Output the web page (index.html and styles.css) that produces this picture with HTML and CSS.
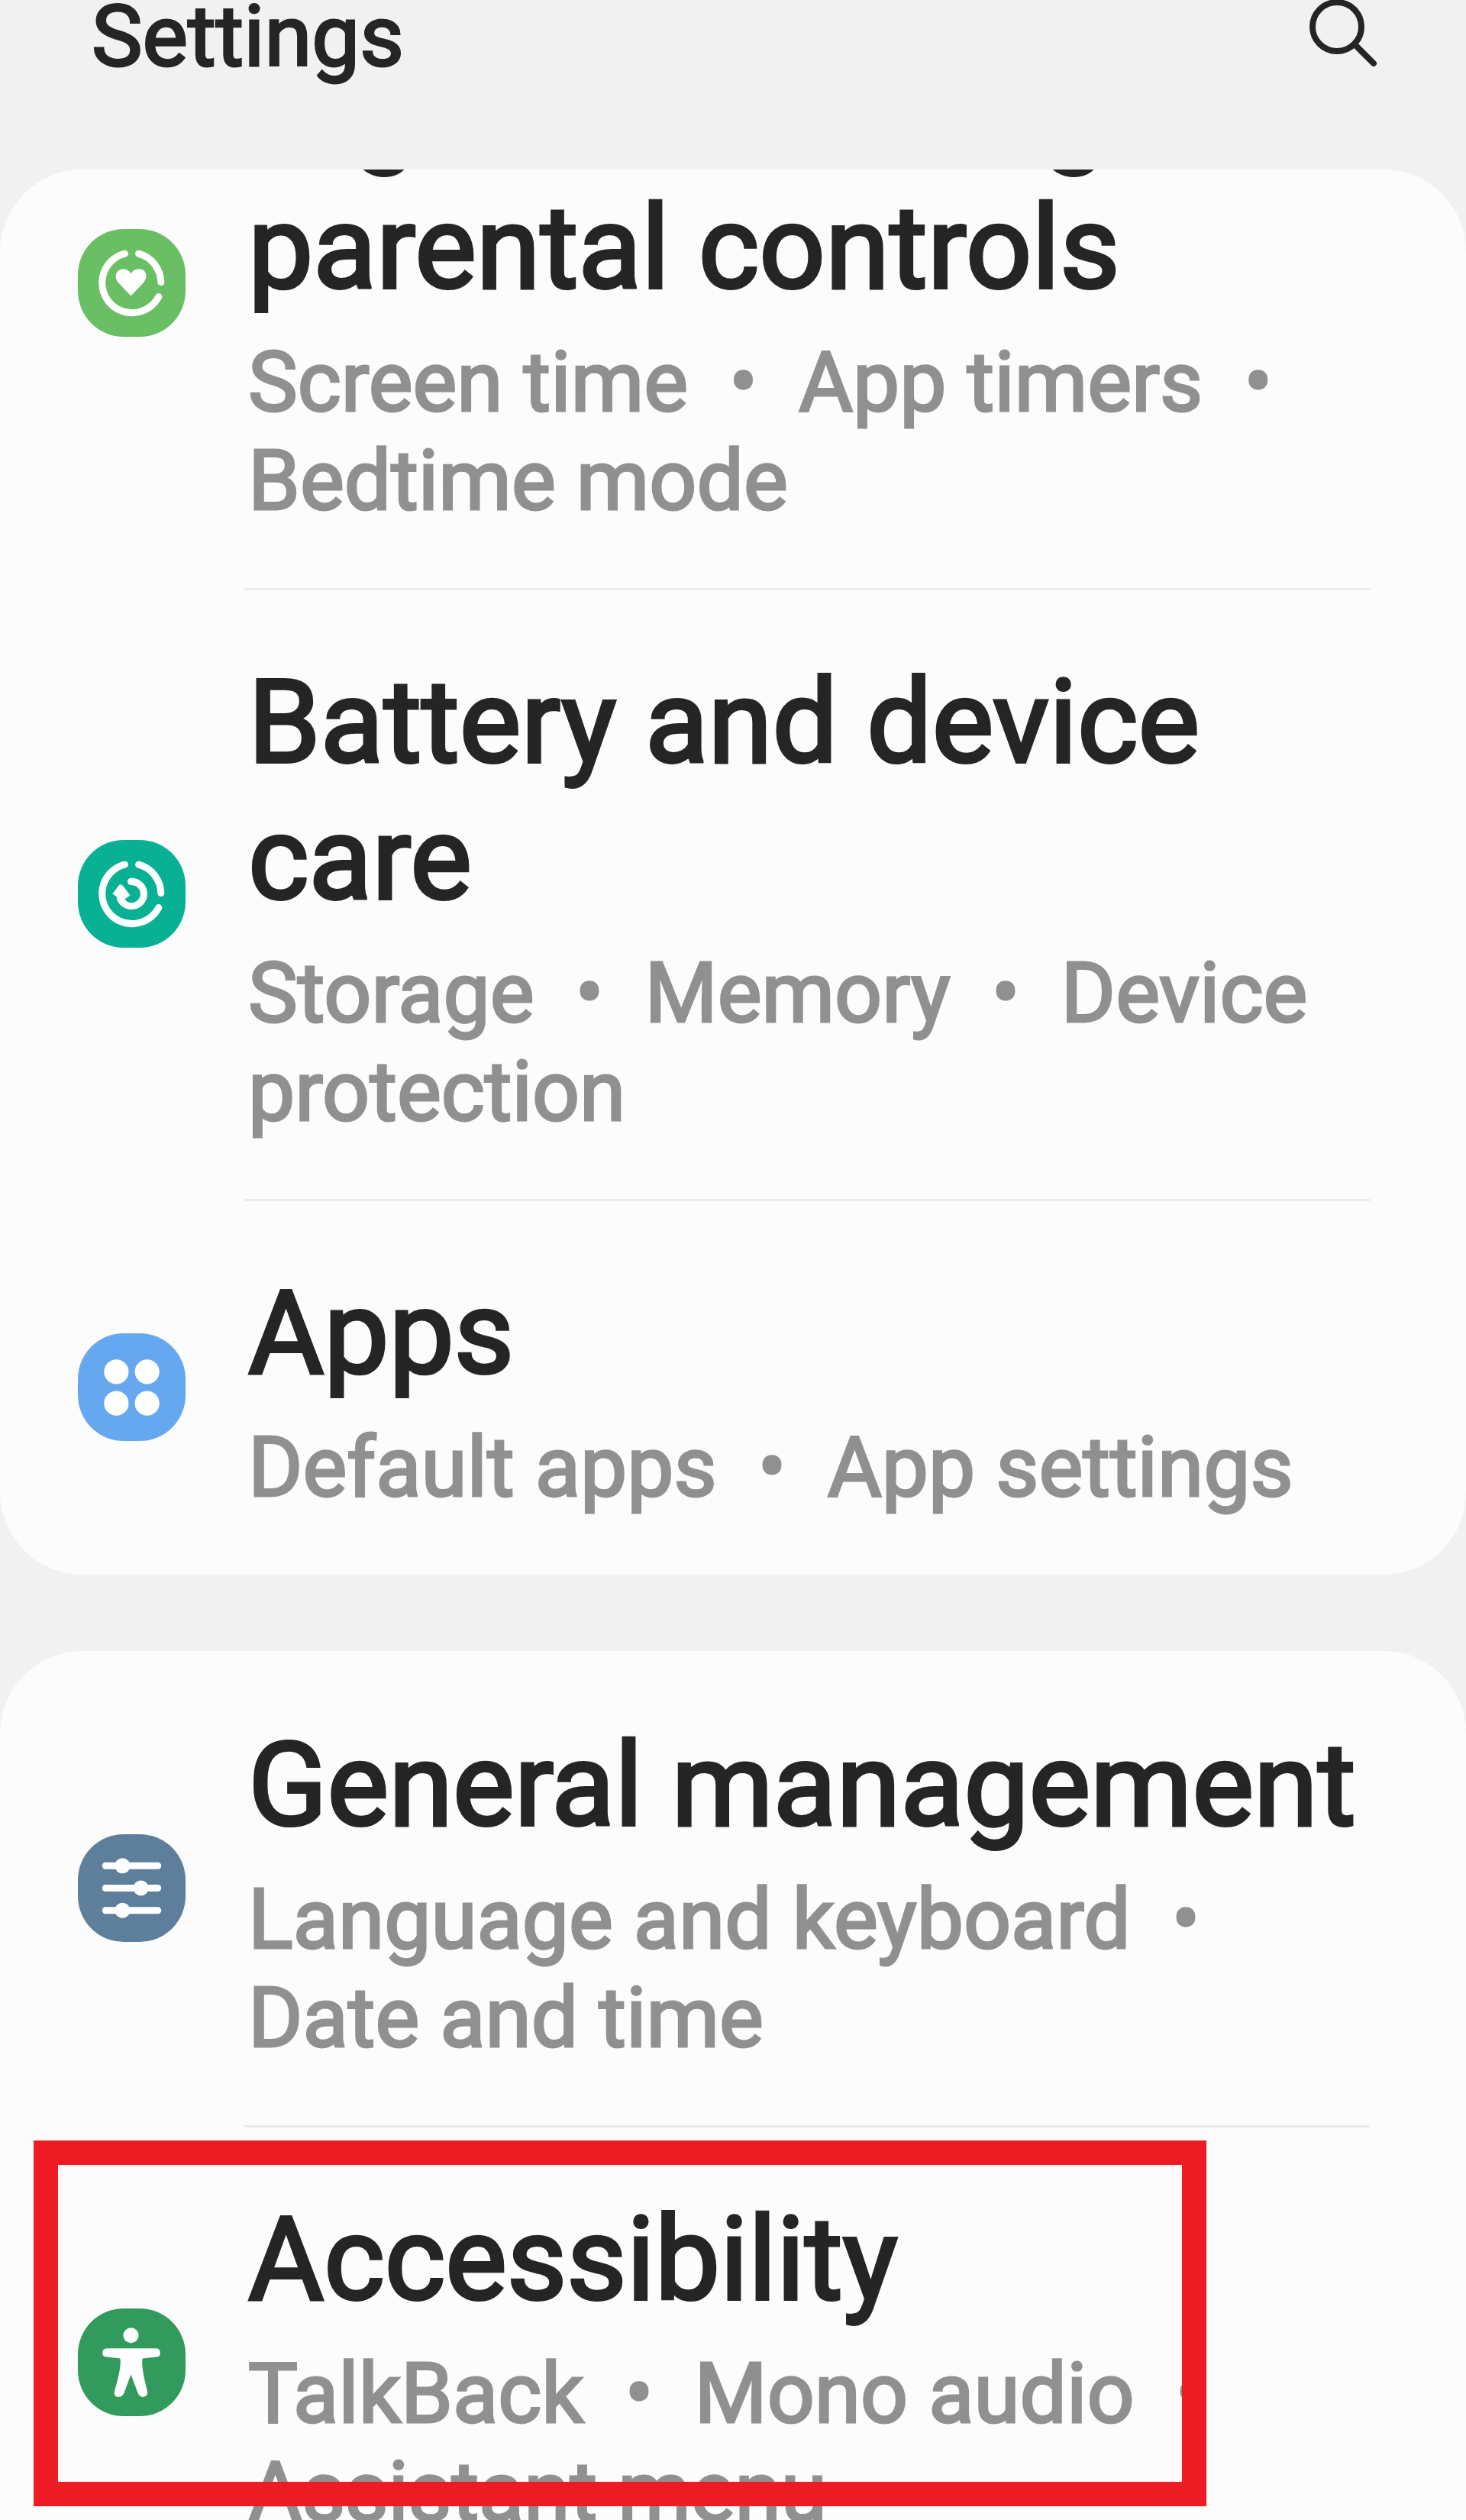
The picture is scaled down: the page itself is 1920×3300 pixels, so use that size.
FILE: index.html
```html
<!DOCTYPE html>
<html lang="en">
<head>
    <meta charset="UTF-8">
    <meta name="viewport" content="width=device-width, initial-scale=1.0">
    <title>Settings</title>
    <link rel="stylesheet" href="styles.css">
</head>
<body>

<header class="header">
    <h1>Settings</h1>
    <button class="search-button" type="button" aria-label="Search">
        <svg viewBox="2 8 96 96">
            <circle cx="41" cy="43" r="32"/>
            <path d="M65 67L89 91"/>
        </svg>
    </button>
</header>

<main class="list">
    <!-- scrolled part way down -->
    <section class="card scrolled">
        <a class="row" href="#wellbeing">
            <svg class="icon wellbeing" viewBox="0 0 140 140">
                <path class="line" d="M61 32A39 39 0 1 0 105 88M79 32A39 39 0 0 1 108 69"/>
                <path class="solid" d="M69 87L52 69C46 61 51 52 59 52C64 52 67 55 69 58C71 55 74 52 80 52C88 52 92 61 86 69Z"/>
            </svg>
            <div class="text">
                <h2>Digital Wellbeing and parental controls</h2>
                <p>Screen time&nbsp;&nbsp;•&nbsp; App timers&nbsp;&nbsp;•&nbsp; Bedtime mode</p>
            </div>
        </a>
        <a class="row" href="#battery">
            <svg class="icon battery" viewBox="0 0 140 140">
                <path class="line" d="M61 32A39 39 0 1 0 105 88M79 32A39 39 0 0 1 108 69"/>
                <path class="line" d="M69 54A16 16 0 1 1 55 76"/>
                <path class="solid" d="M45 70L54 58Q57 57 59 60L68 72L58 79Z"/>
            </svg>
            <div class="text">
                <h2>Battery and device care</h2>
                <p>Storage&nbsp;&nbsp;•&nbsp; Memory&nbsp;&nbsp;•&nbsp; Device protection</p>
            </div>
        </a>
        <a class="row" href="#apps">
            <svg class="icon apps" viewBox="0 0 140 140">
                <g class="solid">
                    <circle cx="50" cy="50" r="16"/>
                    <circle cx="90" cy="50" r="16"/>
                    <circle cx="50" cy="91" r="16"/>
                    <circle cx="90" cy="91" r="16"/>
                </g>
            </svg>
            <div class="text">
                <h2>Apps</h2>
                <p>Default apps&nbsp;&nbsp;•&nbsp; App settings</p>
            </div>
        </a>
    </section>

    <section class="card">
        <a class="row" href="#general">
            <svg class="icon general" viewBox="0 0 140 140">
                <path class="line" d="M36 41H104M36 70H104M36 99H104"/>
                <g class="solid">
                    <circle cx="58" cy="41" r="10"/>
                    <circle cx="82" cy="70" r="10"/>
                    <circle cx="58" cy="99" r="10"/>
                </g>
            </svg>
            <div class="text">
                <h2>General management</h2>
                <p>Language and keyboard&nbsp;&nbsp;•&nbsp; Date and time</p>
            </div>
        </a>
        <a class="row highlighted" href="#accessibility">
            <svg class="icon accessibility" viewBox="0 0 140 140">
                <circle class="solid" cx="69" cy="35" r="10"/>
                <path class="solid" d="M38 52H102Q107 52 107 58Q107 63 102 63L84 65Q82 76 90 106Q92 113 86 115Q81 116 78 110L69 86L60 110Q57 116 51 115Q46 113 48 106Q57 76 55 65L38 63Q32 63 32 58Q32 52 38 52Z"/>
            </svg>
            <div class="text">
                <h2>Accessibility</h2>
                <p>TalkBack&nbsp;&nbsp;•&nbsp; Mono audio&nbsp;&nbsp;•&nbsp; Assistant menu</p>
            </div>
        </a>
    </section>
</main>

</body>
</html>
```

FILE: styles.css
```css
*, *::before, *::after {
    box-sizing: border-box;
}

body {
    background-color: #f1f1f1;
    color: #252525;
    font-family: Roboto, "Liberation Sans", sans-serif;
    margin: 0;
    height: 100vh;
    display: flex;
    flex-direction: column;
    overflow: hidden;
}

h1, h2, p {
    margin: 0;
    font-weight: 400;
}

.header {
    display: flex;
    justify-content: space-between;
    align-items: flex-start;
    flex-shrink: 0;
    height: 222px;
    padding: 0 112px 0 120px;
}

h1 {
    font-size: 112px;
    line-height: 96px;
    -webkit-text-stroke: 3px #252525;
}

.search-button {
    width: 96px;
    height: 96px;
    padding: 0;
    border: none;
    background: none;
    cursor: pointer;
}

.search-button svg {
    display: block;
    width: 96px;
    height: 96px;
    fill: none;
    stroke: #252525;
    stroke-width: 8;
    stroke-linecap: round;
}

.list {
    flex: 1;
    min-height: 0;
    overflow: hidden;
    border-radius: 108px 108px 0 0;
}

.card {
    background-color: #fcfcfc;
    border-radius: 108px;
    margin-bottom: 100px;
}

.scrolled {
    margin-top: -252px;
}

.row {
    display: flex;
    align-items: center;
    gap: 82px;
    padding: 0 126px 0 102px;
    position: relative;
    color: inherit;
    text-decoration: none;
}

.text {
    flex: 1;
    padding: 87px 0 75px;
}

/* line between rows, starts at the text */
.row + .row::before {
    content: "";
    position: absolute;
    top: 0;
    left: 320px;
    right: 126px;
    height: 3px;
    background-color: #ebebeb;
}

h2 {
    font-size: 152px;
    line-height: 179px;
    margin-bottom: 22px;
    -webkit-text-stroke: 4px #252525;
}

p {
    font-size: 109px;
    line-height: 129px;
    color: #909090;
    -webkit-text-stroke: 3px #909090;
}

.icon {
    width: 141px;
    height: 141px;
    flex-shrink: 0;
    border-radius: 60px;
}

.icon .line {
    fill: none;
    stroke: #fff;
    stroke-width: 9;
    stroke-linecap: round;
}

.icon .solid {
    fill: #fff;
}

.wellbeing {
    background-color: #6abf64;
}

.battery {
    background-color: #08b194;
}

.apps {
    background-color: #66a8f0;
}

.general {
    background-color: #5d7f9b;
}

.accessibility {
    background-color: #329a5c;
}

.highlighted::after {
    content: "";
    position: absolute;
    top: 20px;
    left: 44px;
    right: 340px;
    height: 479px;
    border: 32px solid #ed1c24;
}
```
